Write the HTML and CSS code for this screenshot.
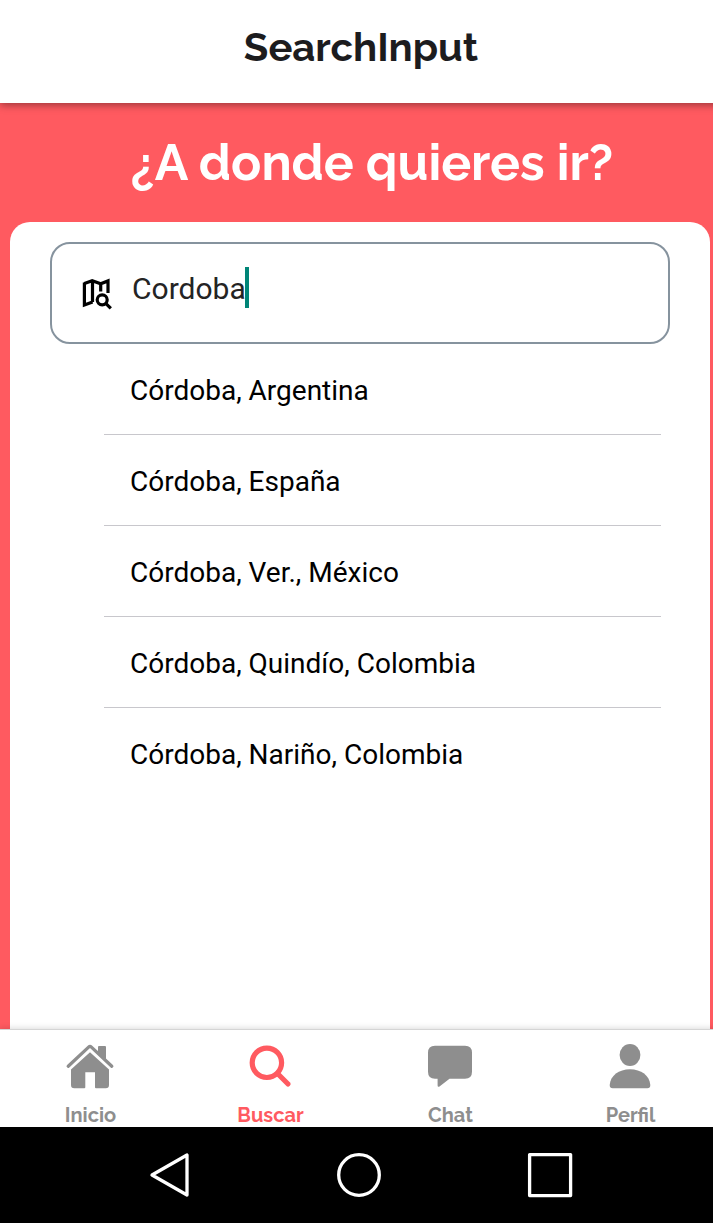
FILE: index.html
```html
<!DOCTYPE html>
<html lang="es">
<head>
<meta charset="utf-8">
<title>SearchInput</title>
<link rel="stylesheet" href="styles.css">
</head>
<body>
<div class="screen">
  <header class="header"><h1 class="header-title">SearchInput</h1></header>
  <main class="search">
    <h2 class="question"><span class="question-text">¿A donde quieres ir?</span></h2>
    <section class="card">
      <div class="field">
        <svg class="field-icon" width="32" height="32" viewBox="0 0 32 32" fill="none" stroke="#000" stroke-width="3.2">
          <path d="M2.4 5.5 10.2 2.7 18.7 5.7 26 2.9V15M2.4 4.5V27L10.6 24M10.5 3V24M18.7 5.5V13.5"/>
          <circle cx="20.2" cy="21.8" r="5"/><path d="m24 25.6 4.8 4.8"/>
        </svg>
        <span class="field-value">Cordoba</span><span class="caret"></span>
      </div>
      <ul class="results">
        <li class="result"><span>Córdoba, Argentina</span></li>
        <li class="result"><span>Córdoba, España</span></li>
        <li class="result"><span>Córdoba, Ver., México</span></li>
        <li class="result"><span>Córdoba, Quindío, Colombia</span></li>
        <li class="result"><span>Córdoba, Nariño, Colombia</span></li>
      </ul>
    </section>
  </main>
  <nav class="tabs">
    <a class="tab">
      <svg width="50" height="50" viewBox="0 0 50 50" fill="currentColor">
        <path d="M33 14V7Q33 6 34 6h6q1 0 1 1V22Z"/>
        <path d="M4.8 28.2 25 9.8 45.2 28.2" fill="none" stroke="#fff" stroke-width="3"/>
        <path d="M6 29.5 25 12.3 44 29.5V45q0 3.3-3.3 3.3H31Q30 48.3 30 47.3V32.3H20.3V47.3Q20.3 48.3 19.3 48.3H9.3Q6 48.3 6 45Z"/>
        <path d="M3.2 26.2 23.6 7.1Q25 5.8 26.4 7.1L46.8 26.2" fill="none" stroke="currentColor" stroke-width="3.3" stroke-linecap="round"/>
      </svg>
      <span class="tab-label">Inicio</span>
    </a>
    <a class="tab active">
      <svg width="50" height="50" viewBox="0 0 50 50" fill="none" stroke="currentColor" stroke-width="5.2">
        <circle cx="21.9" cy="22.8" r="14.7"/><path d="M32.5 33.5 43 44" stroke-linecap="round"/>
      </svg>
      <span class="tab-label">Buscar</span>
    </a>
    <a class="tab">
      <svg width="50" height="50" viewBox="0 0 50 50" fill="currentColor">
        <path d="M10 5.8H40Q47 5.8 47 12.8V31.8Q47 38.8 40 38.8H24.5L14.5 46.5Q12.6 47.4 12.6 45.5V38.8H10Q3 38.8 3 31.8V12.8Q3 5.8 10 5.8Z"/>
      </svg>
      <span class="tab-label">Chat</span>
    </a>
    <a class="tab">
      <svg width="50" height="50" viewBox="0 0 50 50" fill="currentColor">
        <ellipse cx="25" cy="15" rx="10.4" ry="11.1"/>
        <path d="M4.7 45C5.2 35.5 14 29.2 25 29.2S44.8 35.5 45.3 45Q45.3 48.2 42.3 48.2H7.7Q4.7 48.2 4.7 45Z"/>
      </svg>
      <span class="tab-label">Perfil</span>
    </a>
  </nav>
  <footer class="system-bar">
    <svg width="720" height="96" viewBox="0 0 720 96" fill="none" stroke="#fff" stroke-width="3.3" stroke-linejoin="round">
      <path d="M152 48 187 28V68Z"/>
      <circle cx="359" cy="48" r="20.3"/>
      <path d="M529.6 27.6h41v41h-41Z"/>
    </svg>
  </footer>
</div>
</body>
</html>
```
FILE: styles.css
```css
* { box-sizing: border-box; }
body { margin: 0; overflow: hidden; background: #fff; font-family: Roboto, sans-serif; }
.screen { display: flex; flex-direction: column; width: 720px; height: 1223px; }
.header {
  display: flex; justify-content: center; flex: none; height: 103px; padding: 23px 0 0 2px;
  background: #fff; box-shadow: 0 2px 8px rgba(0, 0, 0, .4); z-index: 1;
}
.header-title { margin: 0; font: 700 40px/48px Raleway, Lato, sans-serif; color: #1c1c1e; }
.search { display: flex; flex-direction: column; flex: 1; padding: 0 10px; background: #ff5a60; }
.question {
  display: flex; justify-content: center; height: 119px; margin: 0; padding: 30px 0 0 24px;
  font: 700 50px/60px Raleway, Lato, sans-serif; color: #fff; white-space: nowrap;
}
.card { flex: 1; padding: 20px 40px 0; background: #fff; border-radius: 20px 20px 0 0; }
.field {
  display: flex; align-items: flex-start; width: 620px; height: 102px; padding: 23px 28px;
  border: 2px solid #86939e; border-radius: 20px;
}
.field-icon { margin: 11px 18px 0 2px; }
.field-value { width: 113px; font-size: 30px; line-height: 44px; color: #242424; }
.caret { width: 4px; height: 41px; background: #008577; }
.results { margin: 0 9px 0 54px; padding: 0; list-style: none; }
.result {
  height: 91px; padding: 29px 26px 0; border-bottom: 1px solid #c8c7cc;
  font-size: 28px; line-height: 36px; color: #000; white-space: nowrap;
}
.result:last-child { border-bottom: 0; }
.tabs {
  display: flex; flex: none; height: 98px; background: #fff; border-top: 1px solid #d5d5d5;
  box-shadow: 0 -1px 6px rgba(0, 0, 0, .14); color: #8e8e8e; z-index: 1;
}
.tab { display: flex; flex-direction: column; align-items: center; flex: 1; padding-top: 10px; }
.active { color: #ff5a60; }
.tab svg { flex: none; }
.tab-label { margin-top: 13px; padding-left: 1px; font: 700 20px/24px Raleway, Lato, sans-serif; }
.system-bar { flex: none; height: 96px; background: #000; }
.system-bar svg { display: block; }
```
